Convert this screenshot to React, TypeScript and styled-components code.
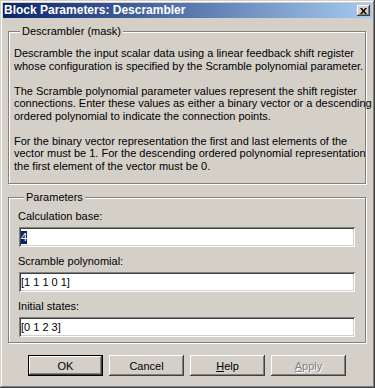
import styled, { createGlobalStyle } from 'styled-components';

const GlobalStyle = createGlobalStyle`
  html, body {
    margin: 0;
    padding: 0;
    background: #d4d0c8;
  }
  body {
    font-family: "Liberation Sans", Arial, sans-serif;
    font-size: 11px;
    color: #000;
  }
`;

const Window = styled.div`
  width: 375px;
  height: 388px;
  box-sizing: border-box;
  padding: 3px;
  background: #d4d0c8;
  box-shadow: inset -1px -1px #404040, inset 1px 1px #d4d0c8,
    inset -2px -2px #808080, inset 2px 2px #fff;
  display: flex;
  flex-direction: column;
`;

const TitleBar = styled.div`
  height: 15px;
  padding: 0 1px 0 1px;
  display: flex;
  align-items: center;
  justify-content: space-between;
  background: linear-gradient(to right, #0a246a, #a6caf0);
`;

const TitleText = styled.span`
  color: #fff;
  font-weight: bold;
  font-size: 12px;
  line-height: 15px;
  white-space: nowrap;
`;

const CloseButton = styled.div`
  width: 13px;
  height: 11px;
  margin-right: 1px;
  background: #d4d0c8;
  box-shadow: inset -1px -1px #404040, inset 1px 1px #fff,
    inset -2px -2px #808080;
  display: flex;
  align-items: center;
  justify-content: center;
`;

const Body = styled.div`
  padding: 7px 6px 0 5px;
  display: flex;
  flex-direction: column;
`;

const Group = styled.fieldset<{ $top?: number; $padTop: number; $padBottom: number; $padLeft: number }>`
  margin: ${(p) => p.$top ?? 0}px 0 0 0;
  padding: ${(p) => p.$padTop}px 5px ${(p) => p.$padBottom}px ${(p) => p.$padLeft}px;
  border: 1px solid #808080;
  box-shadow: inset 1px 1px #fff, 1px 1px #fff;
  min-width: 0;
`;

const Legend = styled.legend`
  margin-left: 6px;
  padding: 0 2px;
  line-height: 13px;
  background: #d4d0c8;
`;

const Paragraph = styled.p`
  margin: 0 0 12.5px 0;
  line-height: 12.5px;
  white-space: nowrap;

  &:last-child {
    margin-bottom: 0;
  }
`;

const FieldLabel = styled.div`
  line-height: 13px;
  margin-bottom: 4px;
`;

const Edit = styled.div<{ $last?: boolean }>`
  width: 336px;
  height: 20px;
  margin: 0 0 ${(p) => (p.$last ? 0 : 8)}px 1px;
  box-sizing: border-box;
  padding: 0 2px;
  background: #fff;
  box-shadow: inset 1px 1px #808080, inset -1px -1px #fff,
    inset 2px 2px #404040, inset -2px -2px #d4d0c8;
  display: flex;
  align-items: center;
  white-space: nowrap;
`;

const Selected = styled.span`
  background: #0a246a;
  color: #fff;
  line-height: 13px;
`;

const ButtonRow = styled.div`
  margin-top: 12px;
  display: flex;
  justify-content: center;
  gap: 6px;
`;

const Button = styled.div<{ $default?: boolean; $disabled?: boolean }>`
  width: 75px;
  height: 21px;
  box-sizing: border-box;
  border: ${(p) => (p.$default ? '1px solid #000' : 'none')};
  background: #d4d0c8;
  box-shadow: inset -1px -1px #404040, inset 1px 1px #fff,
    inset -2px -2px #808080;
  display: flex;
  align-items: center;
  justify-content: center;
  color: ${(p) => (p.$disabled ? '#808080' : '#000')};
  text-shadow: ${(p) => (p.$disabled ? '1px 1px #fff' : 'none')};
`;

const Mnemonic = styled.span`
  text-decoration: underline;
`;

export default function App() {
  return (
    <>
      <GlobalStyle />
      <Window>
        <TitleBar>
          <TitleText>Block Parameters: Descrambler</TitleText>
          <CloseButton>
            <svg width="7" height="6" viewBox="0 0 7 6">
              <path d="M0 0h2l1.5 2L5 0h2L4.5 3 7 6H5L3.5 4 2 6H0l2.5-3z" fill="#000" />
            </svg>
          </CloseButton>
        </TitleBar>
        <Body>
          <Group $padTop={9} $padBottom={11} $padLeft={5}>
            <Legend>Descrambler (mask)</Legend>
            <Paragraph>
              Descramble the input scalar data using a linear feedback shift register
              <br />
              whose configuration is specified by the Scramble polynomial parameter.
            </Paragraph>
            <Paragraph>
              The Scramble polynomial parameter values represent the shift register
              <br />
              connections. Enter these values as either a binary vector or a descending
              <br />
              ordered polynomial to indicate the connection points.
            </Paragraph>
            <Paragraph>
              For the binary vector representation the first and last elements of the
              <br />
              vector must be 1. For the descending ordered polynomial representation
              <br />
              the first element of the vector must be 0.
            </Paragraph>
          </Group>
          <Group $top={7} $padTop={6} $padBottom={5} $padLeft={9}>
            <Legend>Parameters</Legend>
            <FieldLabel>Calculation base:</FieldLabel>
            <Edit>
              <Selected>4</Selected>
            </Edit>
            <FieldLabel>Scramble polynomial:</FieldLabel>
            <Edit>[1 1 1 0 1]</Edit>
            <FieldLabel>Initial states:</FieldLabel>
            <Edit $last>[0 1 2 3]</Edit>
          </Group>
          <ButtonRow>
            <Button $default>OK</Button>
            <Button>Cancel</Button>
            <Button>
              <span>
                <Mnemonic>H</Mnemonic>elp
              </span>
            </Button>
            <Button $disabled>
              <span>
                <Mnemonic>A</Mnemonic>pply
              </span>
            </Button>
          </ButtonRow>
        </Body>
      </Window>
    </>
  );
}
